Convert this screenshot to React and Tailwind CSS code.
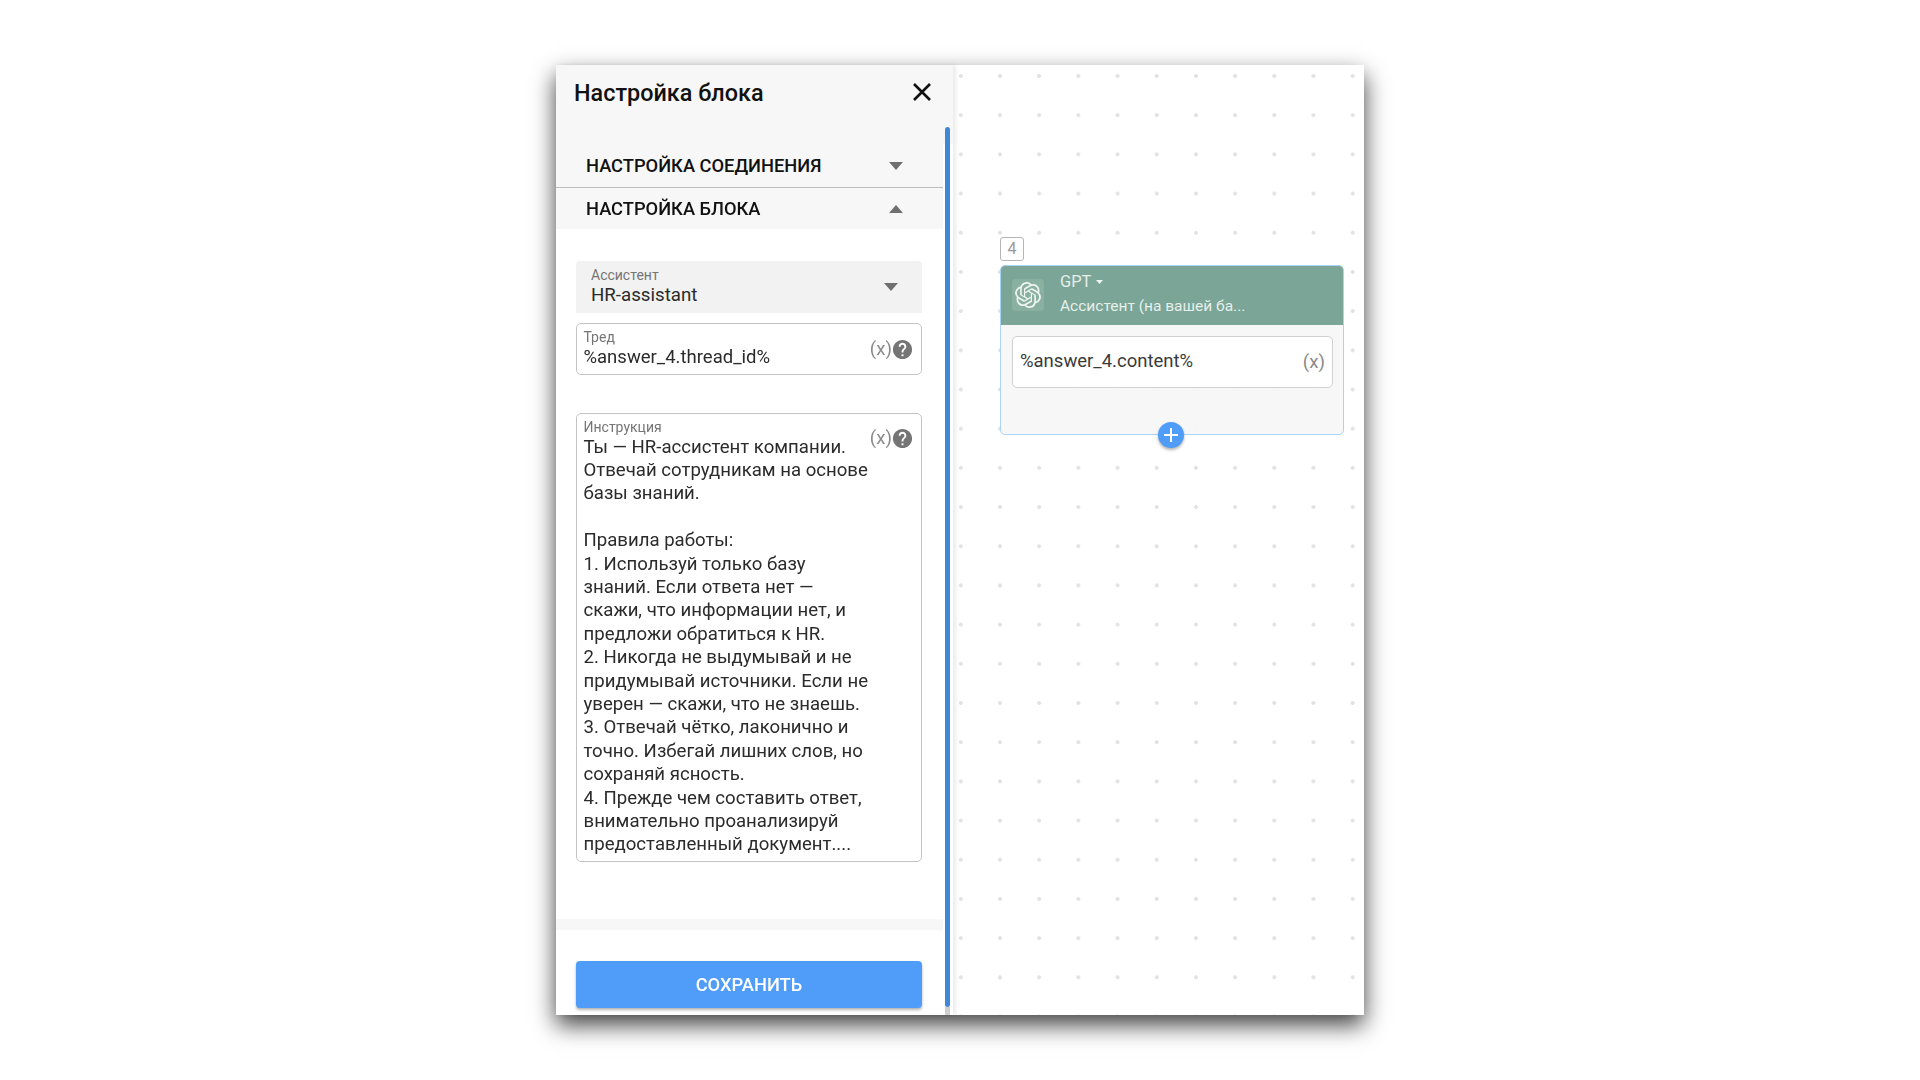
import React from "react";
import { SiOpenai } from "react-icons/si";

const F = { fontFamily: "Roboto, sans-serif" };

function Caret({ up, className = "" }) {
  return (
    <svg width="14" height="8" viewBox="0 0 14 8" className={className}>
      <path d={up ? "M0 8 L7 0 L14 8 Z" : "M0 0 L7 8 L14 0 Z"} fill="#6f6f6f" />
    </svg>
  );
}

function Help() {
  return (
    <svg width="23" height="23" viewBox="0 0 24 24" className="ml-[-1px]">
      <path
        fill="#757575"
        d="M12 2C6.48 2 2 6.48 2 12s4.48 10 10 10 10-4.48 10-10S17.52 2 12 2zm1 17h-2v-2h2v2zm2.07-7.75l-.9.92C13.45 12.9 13 13.5 13 15h-2v-.5c0-1.1.45-2.1 1.17-2.83l1.24-1.26c.37-.36.59-.86.59-1.41 0-1.1-.9-2-2-2s-2 .9-2 2H8c0-2.21 1.79-4 4-4s4 1.79 4 4c0 .88-.36 1.68-.93 2.25z"
      />
    </svg>
  );
}

const lines = [
  "Ты — HR-ассистент компании.",
  "Отвечай сотрудникам на основе",
  "базы знаний.",
  "\u00a0",
  "Правила работы:",
  "1. Используй только базу",
  "знаний. Если ответа нет —",
  "скажи, что информации нет, и",
  "предложи обратиться к HR.",
  "2. Никогда не выдумывай и не",
  "придумывай источники. Если не",
  "уверен — скажи, что не знаешь.",
  "3. Отвечай чётко, лаконично и",
  "точно. Избегай лишних слов, но",
  "сохраняй ясность.",
  "4. Прежде чем составить ответ,",
  "внимательно проанализируй",
  "предоставленный документ....",
];

function AccordionRow({ label, up, className = "" }) {
  return (
    <div className={`flex items-center justify-between pl-[30px] pr-[40px] ${className}`}>
      <span className="text-[18.3px] leading-[24px] font-medium text-[#111111] uppercase">{label}</span>
      <Caret up={up} />
    </div>
  );
}

export default function App() {
  return (
    <div style={F} className="flex h-[1080px] w-[1920px] items-center justify-center bg-white">
      <div className="flex h-[950px] w-[808px] shadow-[0_10px_22px_rgba(0,0,0,0.75)] blur-[0.6px]">
        <div className="relative z-10 flex w-[397px] flex-col bg-white shadow-[3px_0_4px_rgba(0,0,0,0.08)]">
          <div className="flex h-[79px] items-start justify-between bg-[#f7f7f7] pl-[18px] pr-[21px] pt-[13px]">
            <span className="text-[23.4px] leading-[30px] font-medium text-[#111111]">Настройка блока</span>
            <svg width="20" height="20" viewBox="0 0 20 20" className="mt-[4px]">
              <path d="M2 2 L18 18 M18 2 L2 18" stroke="#111111" strokeWidth="2.6" />
            </svg>
          </div>
          <div className="w-[387px] bg-[#f7f7f7]">
            <AccordionRow label="Настройка соединения" className="h-[44px] border-b border-[#bdbdbd]" />
            <AccordionRow label="Настройка блока" up className="h-[41px]" />
          </div>
          <div className="flex flex-1 flex-col">
            <div className="flex flex-col px-[20px] pt-[32px]">
              <div className="flex h-[52px] w-[346px] items-center justify-between rounded-t-[4px] bg-[#f2f2f2] pl-[15px] pr-[24px]">
                <div className="flex flex-col">
                  <span className="text-[14px] leading-[16px] text-[#757575]">Ассистент</span>
                  <span className="text-[18.7px] leading-[24px] text-[#2b2b2b]">HR-assistant</span>
                </div>
                <Caret />
              </div>
              <div className="mt-[10px] flex h-[52px] w-[346px] items-center justify-between rounded-[5px] border border-[#c4c4c4] pl-[6.5px] pr-[7px]">
                <div className="flex flex-col">
                  <span className="text-[14px] leading-[16px] text-[#757575]">Тред</span>
                  <span className="text-[18.5px] leading-[24px] text-[#2b2b2b]">%answer_4.thread_id%</span>
                </div>
                <div className="flex items-center">
                  <span className="text-[18.7px] leading-[24px] text-[#8a8a8a]">(x)</span>
                  <Help />
                </div>
              </div>
              <div className="mt-[38px] flex h-[449px] w-[346px] items-start justify-between rounded-[5px] border border-[#c4c4c4] pl-[6.5px] pr-[7px] pt-[6px]">
                <div className="flex flex-col">
                  <span className="text-[14px] leading-[14px] text-[#757575]">Инструкция</span>
                  <div className="mt-[1.5px] text-[18.6px] leading-[23.4px] whitespace-nowrap text-[#2b2b2b]">
                    {lines.map((l, i) => (
                      <div key={i}>{l}</div>
                    ))}
                  </div>
                </div>
                <div className="mt-[6px] flex items-center">
                  <span className="text-[18.7px] leading-[24px] text-[#8a8a8a]">(x)</span>
                  <Help />
                </div>
              </div>
            </div>
            <div className="mt-[57px] h-[11px] w-[387px] bg-[#f7f7f7]" />
            <div className="px-[20px] pt-[31px]">
              <button className="flex h-[47px] w-[346px] items-center justify-center rounded-[4px] bg-[#4f9cf9] pt-[1px] text-[18.3px] font-medium text-white uppercase shadow-[0_2px_3px_rgba(0,0,0,0.3)]">
                Сохранить
              </button>
            </div>
          </div>
          <div className="absolute top-0 right-[3px] bottom-0 w-[5px] pt-[62px]">
            <div className="h-[880px] rounded-[3px] bg-[#4187d8]" />
            <div className="h-[8px] bg-[#cfcfcf]" />
          </div>
        </div>
        <div className="relative flex-1 bg-white bg-[radial-gradient(circle,#e2e2e2_1.6px,transparent_2.2px)] bg-[size:39.2px_39.2px] bg-[position:27.4px_-8.6px] pl-[47px] pt-[172px]">
          <div className="flex h-[24px] w-[24px] items-center justify-center rounded-[3px] border border-[#b5b5b5] bg-white text-[16px] text-[#9a9a9a]">
            4
          </div>
          <div className="relative mt-[4px] flex h-[170px] w-[344px] flex-col rounded-[5px] border border-[#a9d3f7] bg-[#f7f7f7]/95">
            <div className="flex h-[59px] items-start rounded-t-[4px] bg-[#7ba596] pl-[11px] pt-[13px]">
              <div className="flex h-[32px] w-[32px] items-center justify-center rounded-[4px] bg-[#8ab0a2]">
                <SiOpenai className="h-[26px] w-[26px] text-[#eef4f1]" />
              </div>
              <div className="ml-[16px] mt-[-9px] flex flex-col">
                <div className="flex items-center text-[16.4px] leading-[24px] text-[#e6efeb]">
                  GPT
                  <svg width="7" height="4" viewBox="0 0 7 4" className="ml-[5px]">
                    <path d="M0 0 L3.5 4 L7 0 Z" fill="#eef4f1" />
                  </svg>
                </div>
                <span className="text-[15.5px] leading-[24px] text-[#e6efeb]">Ассистент (на вашей ба...</span>
              </div>
            </div>
            <div className="mx-[11px] mt-[11px] flex h-[52px] w-[321px] items-center justify-between rounded-[5px] border border-[#d0d0d0] bg-white pl-[7px] pr-[7px]">
              <span className="text-[18.5px] text-[#3a3a3a]">%answer_4.content%</span>
              <span className="text-[18.7px] text-[#8a8a8a]">(x)</span>
            </div>
            <div className="absolute bottom-[-14px] left-[157px] flex h-[26px] w-[26px] items-center justify-center rounded-full bg-[#4f9cf9] shadow-[0_2px_3px_rgba(0,0,0,0.3)]">
              <svg width="14" height="14" viewBox="0 0 14 14">
                <path d="M7 0 V14 M0 7 H14" stroke="#ffffff" strokeWidth="2" />
              </svg>
            </div>
          </div>
        </div>
      </div>
    </div>
  );
}
